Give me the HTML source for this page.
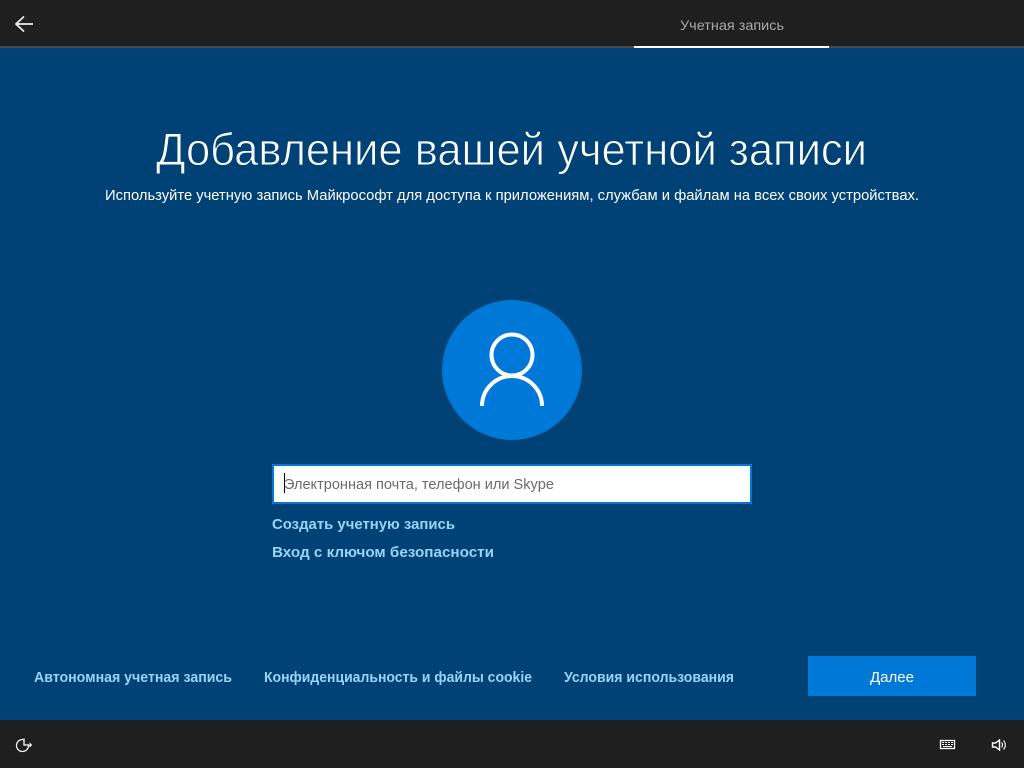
<!DOCTYPE html>
<html lang="ru">
<head>
<meta charset="utf-8">
<title>Учетная запись</title>
<style>
html,body{margin:0;padding:0;width:1024px;height:768px;overflow:hidden;background:#004275}
svg{display:block;position:absolute;left:0;top:0}
text{font-family:"Liberation Sans",sans-serif}
</style>
</head>
<body>
<svg width="1024" height="768" viewBox="0 0 1024 768" xmlns="http://www.w3.org/2000/svg">
<rect width="1024" height="768" fill="#004275"/>
<rect width="1024" height="46" fill="#1f1f1f"/>
<rect y="46" width="1024" height="2" fill="#4a4a4a"/>
<rect x="634" y="46" width="195" height="2" fill="#fff"/>
<path d="M33 24H16M24 16.500l-8 7.500 8 7.500" fill="none" stroke="#ececec" stroke-width="1.800"/>
<text x="680" y="30" font-size="14" fill="#a8a8a8" textLength="104" lengthAdjust="spacingAndGlyphs">Учетная запись</text>

<text x="156" y="165" font-size="45" fill="#fff" stroke="#004275" stroke-width="0.900" textLength="711" lengthAdjust="spacingAndGlyphs">Добавление вашей учетной записи</text>
<text x="105" y="200" font-size="15" fill="#fff" textLength="814" lengthAdjust="spacingAndGlyphs">Используйте учетную запись Майкрософт для доступа к приложениям, службам и файлам на всех своих устройствах.</text>

<circle cx="512" cy="370" r="70" fill="#0078d7"/>
<circle cx="512" cy="355" r="20.500" fill="none" stroke="#fff" stroke-width="4"/>
<path d="M482 406A30 30 0 0 1 542 406" fill="none" stroke="#fff" stroke-width="4"/>

<rect x="273" y="465" width="478" height="38" fill="#fff" stroke="#0078d7" stroke-width="2"/>
<rect x="284" y="473" width="1" height="20" fill="#000"/>
<text x="284" y="489" font-size="15" fill="#6b6b6b" textLength="270" lengthAdjust="spacingAndGlyphs">Электронная почта, телефон или Skype</text>

<g font-size="15" font-weight="700" fill="#99d3f5">
<text x="272" y="529" textLength="183" lengthAdjust="spacingAndGlyphs">Создать учетную запись</text>
<text x="272" y="557" textLength="222" lengthAdjust="spacingAndGlyphs">Вход с ключом безопасности</text>
<text x="34" y="682" textLength="198" lengthAdjust="spacingAndGlyphs">Автономная учетная запись</text>
<text x="264" y="682" textLength="268" lengthAdjust="spacingAndGlyphs">Конфиденциальность и файлы cookie</text>
<text x="564" y="682" textLength="170" lengthAdjust="spacingAndGlyphs">Условия использования</text>
</g>

<rect x="808" y="656" width="168" height="40" fill="#0078d7"/>
<text x="870" y="682" font-size="15" fill="#fff" textLength="44" lengthAdjust="spacingAndGlyphs">Далее</text>

<rect y="720" width="1024" height="48" fill="#1f1f1f"/>
<path d="M24 739.700A6 6 0 1 0 28.500 745.500" fill="none" stroke="#f2f2f2" stroke-width="1.300"/>
<path d="M24 738.500V745H31.500" fill="none" stroke="#fff" stroke-width="1.300"/>
<path d="M29.500 743l2 2-2 2" fill="none" stroke="#f2f2f2" stroke-width="1"/>

<rect x="940.500" y="740.500" width="14" height="8" fill="none" stroke="#fff" stroke-width="1.300"/>
<path d="M942 742.500h11M942 744.500h11" stroke="#fff" stroke-width="1" stroke-dasharray="2 1"/>
<path d="M943 746.500h9" stroke="#fff" stroke-width="1"/>
<path d="M992.500 743h3l4-3v10l-4-3h-3z" fill="none" stroke="#fff" stroke-width="1.400"/>
<path d="M1001.500 742.500a3.500 3.500 0 0 1 0 5M1003.500 740.500a6.500 6.500 0 0 1 0 9" fill="none" stroke="#f2f2f2" stroke-width="1.200"/>
</svg>
</body>
</html>
